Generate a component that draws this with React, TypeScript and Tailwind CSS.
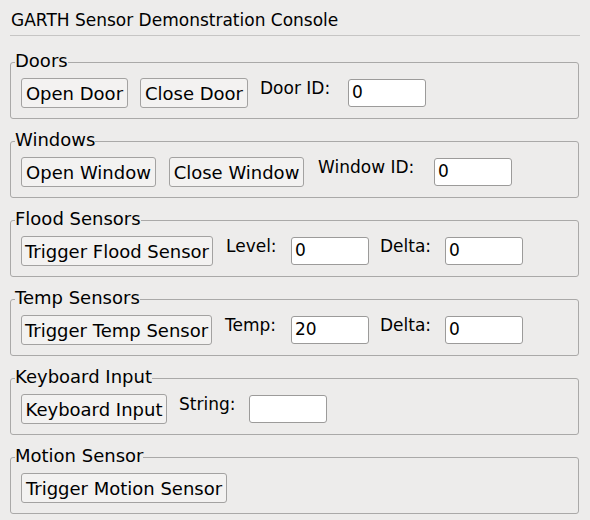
import type { ReactNode } from "react";

type Item =
  | { kind: "button"; text: string; width: string; gap: string }
  | { kind: "label"; text: string; width: string; gap: string }
  | { kind: "input"; value: string };

type Group = { title: string; items: Item[] };

const groups: Group[] = [
  {
    title: "Doors",
    items: [
      { kind: "button", text: "Open Door", width: "w-[107px]", gap: "ml-0" },
      { kind: "button", text: "Close Door", width: "w-[108px]", gap: "ml-[12px]" },
      { kind: "label", text: "Door ID:", width: "w-[88px]", gap: "ml-[12px]" },
      { kind: "input", value: "0" },
    ],
  },
  {
    title: "Windows",
    items: [
      { kind: "button", text: "Open Window", width: "w-[135px]", gap: "ml-0" },
      { kind: "button", text: "Close Window", width: "w-[135px]", gap: "ml-[13px]" },
      { kind: "label", text: "Window ID:", width: "w-[116px]", gap: "ml-[14px]" },
      { kind: "input", value: "0" },
    ],
  },
  {
    title: "Flood Sensors",
    items: [
      { kind: "button", text: "Trigger Flood Sensor", width: "w-[192px]", gap: "ml-0" },
      { kind: "label", text: "Level:", width: "w-[65px]", gap: "ml-[13px]" },
      { kind: "input", value: "0" },
      { kind: "label", text: "Delta:", width: "w-[65px]", gap: "ml-[11px]" },
      { kind: "input", value: "0" },
    ],
  },
  {
    title: "Temp Sensors",
    items: [
      { kind: "button", text: "Trigger Temp Sensor", width: "w-[191px]", gap: "ml-0" },
      { kind: "label", text: "Temp:", width: "w-[66px]", gap: "ml-[13px]" },
      { kind: "input", value: "20" },
      { kind: "label", text: "Delta:", width: "w-[65px]", gap: "ml-[11px]" },
      { kind: "input", value: "0" },
    ],
  },
  {
    title: "Keyboard Input",
    items: [
      { kind: "button", text: "Keyboard Input", width: "w-[146px]", gap: "ml-0" },
      { kind: "label", text: "String:", width: "w-[70px]", gap: "ml-[12px]" },
      { kind: "input", value: "" },
    ],
  },
  {
    title: "Motion Sensor",
    items: [{ kind: "button", text: "Trigger Motion Sensor", width: "w-[206px]", gap: "ml-0" }],
  },
];

function Field({ item }: { item: Item }) {
  if (item.kind === "button") {
    return (
      <button
        type="button"
        className={`${item.gap} ${item.width} h-[30px] shrink-0 whitespace-nowrap rounded-[3px] border border-[#a3a2a1] bg-[#f3f2f1] pt-[2px] text-center text-[18px]`}
      >
        {item.text}
      </button>
    );
  }
  if (item.kind === "label") {
    return <span className={`${item.gap} ${item.width} shrink-0 whitespace-nowrap`}>{item.text}</span>;
  }
  return (
    <input
      readOnly
      value={item.value}
      className="mt-px h-[28px] w-[78px] shrink-0 rounded-[3px] border border-[#9c9b9a] bg-white pb-[2px] pl-[3px] outline-none"
    />
  );
}

function GroupBox({ title, children }: { title: string; children: ReactNode }) {
  return (
    <fieldset className="w-[569px] rounded-[3px] border border-[#aaa9a8] pb-[10px] pt-[5px]">
      <legend className="ml-[4px] px-0 pb-[3px] text-[18px] leading-[18px]">{title}</legend>
      <div className="pl-[10px]">{children}</div>
    </fieldset>
  );
}

export default function App() {
  return (
    <div className="min-h-[520px] w-[590px] bg-[#edeceb] pl-[10px] pt-[10px] font-['DejaVu_Sans',sans-serif] text-[17px] leading-[20px] text-black">
      <div className="pl-px">GARTH Sensor Demonstration Console</div>
      <div className="mt-[5px] h-px w-[570px] bg-[#c6c5c4]" />
      <div className="mt-[16px] flex flex-col gap-[12px]">
        {groups.map((group) => (
          <GroupBox key={group.title} title={group.title}>
            <div className="flex items-start">
              {group.items.map((item, i) => (
                <Field key={i} item={item} />
              ))}
            </div>
          </GroupBox>
        ))}
      </div>
    </div>
  );
}
